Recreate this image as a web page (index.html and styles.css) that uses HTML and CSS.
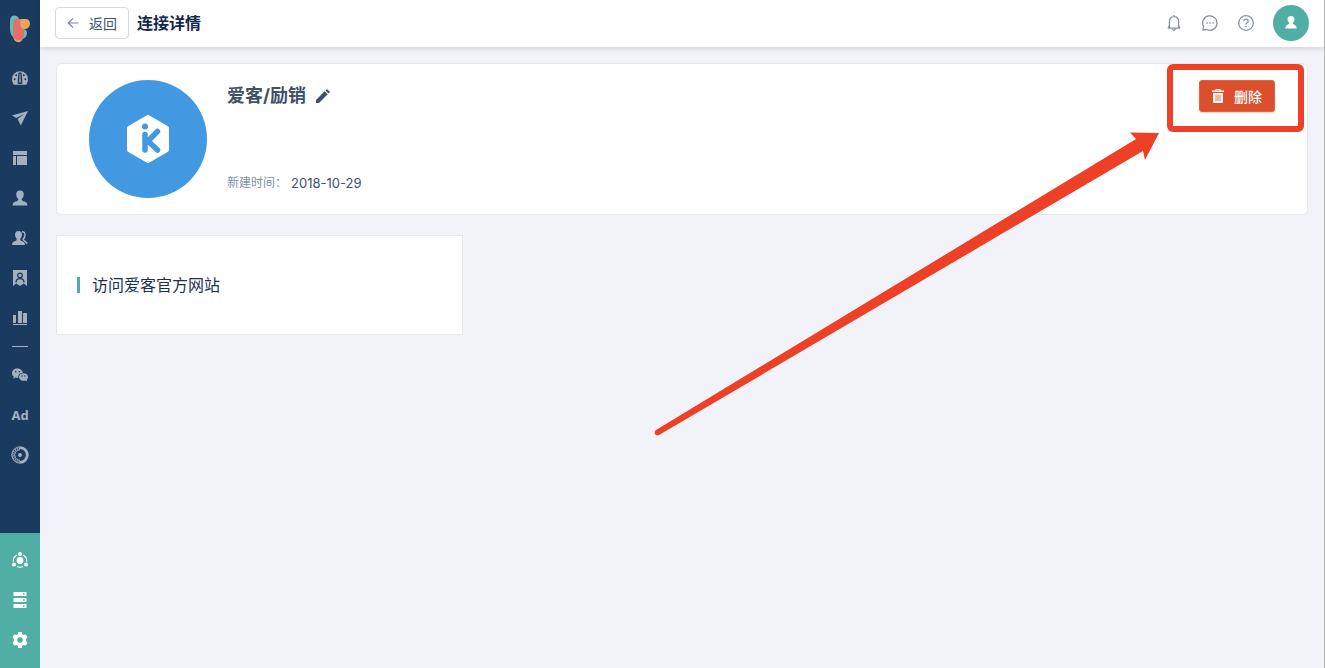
FILE: index.html
```html
<!DOCTYPE html>
<html lang="zh-CN">
<head>
  <meta charset="UTF-8" />
  <meta name="viewport" content="width=device-width, initial-scale=1" />
  <title>连接详情</title>
  <link rel="stylesheet" href="styles.css">
</head>
<body>

  <!-- Sidebar -->
  <nav class="sidebar">
    <a class="logo" href="#home" aria-label="首页">
      <svg width="24" height="30" viewBox="0 0 24 30">
        <path d="M2 7Q2 1.500 6.500 1.500Q10 1.500 11 5V24H7Q2 22 2 15Z" fill="#64bdb2"/>
        <path d="M13 15Q19 14.500 19 19Q19 24.500 13 25Z" fill="#64bdb2"/>
        <path d="M5 22H15Q14.500 28.200 10.500 28.200Q6 28.200 5 22Z" fill="#eba55b"/>
        <path d="M12 5H18Q22 5.500 22 10Q21.500 15 16.500 15H12Z" fill="#eba55b"/>
        <path d="M5 10Q5 5 10 5H12.500Q11 14.500 16 15V20Q15.500 26 10.500 26Q5 26 5 20Z" fill="#e46f6e"/>
      </svg>
    </a>
    <div class="menu">
      <a href="#dashboard" aria-label="仪表盘">
        <svg viewBox="0 0 16 16"><path d="M8 1.200A8 8 0 0 0 0 9.200Q0 12.500 1.800 14.800H14.200Q16 12.500 16 9.200A8 8 0 0 0 8 1.200Z"/><g fill="#1b3a5f"><circle cx="2.600" cy="9.200" r="1"/><circle cx="4.200" cy="5.300" r="1"/><circle cx="11.800" cy="5.300" r="1"/><circle cx="13.400" cy="9.200" r="1"/><path fill-rule="evenodd" d="M6.500 2.500H9.500L10.200 9.500V14H5.800V9.500ZM7.600 4L7.200 12.500H8.800L8.400 4Z"/></g></svg>
      </a>
      <a href="#send" aria-label="发送">
        <svg viewBox="0 0 16 16"><path d="M16 1L0 5.500L4.300 8L12.500 3.800L5.600 9.100L8.800 15.500Z"/></svg>
      </a>
      <a href="#pages" aria-label="页面">
        <svg viewBox="0 0 16 16"><path d="M1 1H15V5H1ZM1 6H4V15H1ZM5 6H15V15H5Z"/></svg>
      </a>
      <a href="#contacts" aria-label="联系人">
        <svg viewBox="0 0 16 16"><path d="M8 .5C5.600.5 4.200 2 4.200 4.500Q4.200 7.300 6.200 9V10Q6 11 3 11.800Q.5 12.500.5 15.500H15.500Q15.500 12.500 13 11.800Q10 11 9.800 10V9Q11.800 7.300 11.800 4.500C11.800 2 10.400.5 8 .5Z"/></svg>
      </a>
      <a href="#groups" aria-label="群组">
        <svg viewBox="0 0 16 16"><path d="M6.500 1C4.300 1 3 2.500 3 4.800Q3 7.300 4.700 8.800V10Q4.500 10.800 2 11.600Q0 12.300 0 15H13Q13 12.300 11 11.600Q8.500 10.800 8.300 10V8.800Q10 7.300 10 4.800C10 2.500 8.700 1 6.500 1Z"/><path d="M10 1.700Q13 1.500 13 5Q13 7.500 11.300 8.800V9.800L15.300 13.600" fill="none" stroke="#a3b1bf" stroke-width="1.500"/></svg>
      </a>
      <a href="#cards" aria-label="名片">
        <svg viewBox="0 0 16 16"><path d="M1 0H15V16L11.800 13.500L8 16L4.200 13.500L1 16Z"/><g fill="none" stroke="#1b3a5f" stroke-width="1.300"><circle cx="8" cy="5.400" r="2.300"/><path d="M4 12.500Q4 8.700 8 8.700Q12 8.700 12 12.500"/></g></svg>
      </a>
      <a href="#reports" aria-label="报表">
        <svg viewBox="0 0 16 16"><path d="M1 5H4V13H1ZM6 1H10V13H6ZM11 3H15V13H11ZM1 14H15V15H1Z"/></svg>
      </a>
    </div>
    <div class="menu menu-extra">
      <a href="#wechat" aria-label="微信">
        <svg viewBox="0 0 16 16"><path d="M5.500 1.500C2.400 1.500 0 3.500 0 6.200Q0 8.300 1.800 9.700L1.200 11.800L3.600 10.600Q4.800 11 6.200 10.900Q5.800 6.300 11 5.500C10.400 3.200 8.300 1.500 5.500 1.500Z"/><path d="M11.500 6.200C8.900 6.200 7 7.900 7 10C7 12.200 9 13.800 11.500 13.800Q12.500 13.800 13.300 13.400L15.200 14.500L14.700 12.700Q16 11.600 16 10C16 7.900 14 6.200 11.500 6.200Z"/><g fill="#1b3a5f"><circle cx="3.700" cy="4.800" r=".8"/><circle cx="7.400" cy="4.800" r=".8"/><circle cx="10" cy="9" r=".7"/><circle cx="13" cy="9" r=".7"/></g></svg>
      </a>
      <a class="ad" href="#ad">Ad</a>
      <a href="#data" aria-label="数据">
        <svg class="wide" viewBox="0 0 18 18" fill="none" stroke="#a3b1bf"><path d="M9 1.700A7.300 7.300 0 0 1 9 16.300" stroke-width="2.800"/><path d="M9 .8A8.200 8.200 0 0 0 9 17.200M9 3.700A5.300 5.300 0 0 0 9 14.300" stroke-width="1"/><path d="M9 2.200A6.800 6.800 0 0 0 9 15.800" stroke-width="1.800" stroke-dasharray="1.200 1"/><circle cx="9" cy="9" r="2" fill="#a3b1bf" stroke="none"/></svg>
      </a>
    </div>
    <div class="menu menu-bottom">
      <a href="#connect" aria-label="连接">
        <svg viewBox="0 0 16 16"><circle cx="8" cy="8.500" r="3.400"/><circle cx="8" cy="2" r="2"/><circle cx="2" cy="12.500" r="2"/><circle cx="14" cy="12.500" r="2"/><path d="M5 3A6.700 6.700 0 0 0 1.300 9.500M11 3A6.700 6.700 0 0 1 14.700 9.500M4.900 14.600Q8 16 11.100 14.600" fill="none" stroke="#fff" stroke-width="1.100"/></svg>
      </a>
      <a href="#storage" aria-label="资源">
        <svg viewBox="0 0 16 16"><path d="M1.500 0H14.500V4H1.500ZM1.500 6H14.500V10H1.500ZM1.500 12H14.500V16H1.500Z"/><path d="M11 2H12.500M11 8H12.500M11 14H12.500" stroke="#50aea5" stroke-width="1.300"/></svg>
      </a>
      <a href="#settings" aria-label="设置">
        <svg viewBox="0 0 16 16"><path fill-rule="evenodd" d="M6.300 0H9.700L10.200 2.300L11.600 3.100L13.900 2.400L15.600 5.300L13.900 6.900V9.100L15.600 10.700L13.900 13.600L11.600 12.900L10.200 13.700L9.700 16H6.300L5.800 13.700L4.400 12.900L2.100 13.600L.4 10.700L2.100 9.100V6.900L.4 5.300L2.100 2.400L4.400 3.100L5.800 2.300ZM8 5.200A2.800 2.800 0 1 0 8 10.800A2.800 2.800 0 1 0 8 5.200Z"/></svg>
      </a>
    </div>
  </nav>

  <div class="page">
    <header class="topbar">
      <button type="button" class="back">
        <svg width="12" height="12" viewBox="0 0 12 12" fill="none" stroke="#7a8798" stroke-width="1.200"><path d="M11.500 6H1.500M6 1.300L1.300 6L6 10.700"/></svg>
        返回
      </button>
      <h1>连接详情</h1>
      <div class="tools">
        <button type="button" aria-label="通知">
          <svg width="16" height="16" viewBox="0 0 16 16"><path d="M8 0V1.500M2 13.200H14M3.400 13V7Q3.400 1.700 8 1.700Q12.600 1.700 12.600 7V13M6.300 14Q8 16.500 9.700 14M3.400 10.500L2 13.200M12.600 10.500L14 13.200"/></svg>
        </button>
        <button type="button" aria-label="消息">
          <svg width="16" height="16" viewBox="0 0 16 16"><path d="M1 15L1.500 11.500A7.200 7.200 0 1 1 4.600 14.500Z"/><path d="M4.300 8H5.700M7.300 8H8.700M10.300 8H11.700" stroke-width="1.400"/></svg>
        </button>
        <button type="button" aria-label="帮助">
          <svg width="16" height="16" viewBox="0 0 16 16"><circle cx="8" cy="8" r="7.300"/><path d="M5.800 6.300Q5.800 4.200 8 4.200Q10.200 4.200 10.200 6.200Q10.200 7.200 9.100 7.800Q8 8.400 8 9.600M8 10.900V12.100"/></svg>
        </button>
        <button type="button" class="avatar" aria-label="账户">
          <svg width="12" height="13" viewBox="0 0 12 13"><path d="M6 0C3.800 0 2.500 1.300 2.500 3.400Q2.500 5.500 4 6.700V8Q.3 9 .3 12.500H11.700Q11.700 9 8 8V6.700Q9.500 5.500 9.500 3.400C9.500 1.300 8.200 0 6 0Z"/></svg>
        </button>
      </div>
    </header>

    <main>
      <section class="card detail">
        <svg class="app-logo" width="118" height="118" viewBox="0 0 118 118">
          <circle cx="59" cy="59" r="59" fill="#4398e2"/>
          <path d="M59 37L78 48V70L59 81L40 70V48Z" fill="#fff" stroke="#fff" stroke-width="4" stroke-linejoin="round"/>
          <circle cx="56" cy="46.500" r="3" fill="#4398e2"/>
          <path d="M56 54.500V70M68.500 51.500L59 61L68.500 70" fill="none" stroke="#4398e2" stroke-width="5.500" stroke-linecap="round" stroke-linejoin="round"/>
        </svg>
        <div class="info">
          <div class="name">
            <h2>爱客/励销</h2>
            <button type="button" class="edit" aria-label="编辑">
              <svg width="14" height="14" viewBox="0 0 14 14"><path d="M0 14V11L8.700 2.300L11.700 5.300L3 14ZM9.500 1.500L10.600.4Q11 0 11.400.4L13.600 2.600Q14 3 13.600 3.400L12.500 4.500Z"/></svg>
            </button>
          </div>
          <p class="created"><span>新建时间：</span><time datetime="2018-10-29">2018-10-29</time></p>
        </div>
        <button type="button" class="delete">
          <svg width="12" height="14" viewBox="0 0 12 14"><path fill-rule="evenodd" d="M3.500 1.500V0H8.500V1.500H12V3H0V1.500ZM4.500 1V1.500H7.500V1ZM1 4H11V13Q11 14 10 14H2Q1 14 1 13Z"/><path d="M4 5.500V12M6 5.500V12M8 5.500V12" stroke="#dc4f2c" stroke-width=".8"/></svg>
          删除
        </button>
        <!-- Marks the delete button -->
        <div class="marker">
          <svg width="506" height="306" viewBox="0 0 506 306"><path d="M3 298L483 7L477 .5L506 1L492 28L490 19L6 303Q3 304 2 302Q1 299.500 3 298Z"/></svg>
        </div>
      </section>

      <a class="card link-card" href="#official"><span>访问爱客官方网站</span></a>
    </main>
  </div>

</body>
</html>
```

FILE: styles.css
```css
* {
  box-sizing: border-box;
}
body {
  display: flex;
  min-height: 100vh;
  margin: 0;
  background-color: #f2f3f8;
  border-right: 1px solid #b5b5b8;
  color: #1b3150;
  font-family: Inter, "Noto Sans CJK SC", sans-serif;
  font-size: 14px;
}
h1, h2, p {
  margin: 0;
}
a {
  color: inherit;
  text-decoration: none;
}
button {
  display: flex;
  align-items: center;
  justify-content: center;
  padding: 0;
  border: none;
  background: none;
  font: inherit;
  cursor: pointer;
}
svg {
  display: block;
  flex: none;
}

/* Sidebar */
.sidebar {
  display: flex;
  flex-direction: column;
  flex: none;
  width: 40px;
  background-color: #1b3a5f;
}
.logo {
  display: flex;
  justify-content: center;
  height: 58px;
  padding-top: 14px;
}
.menu a {
  display: flex;
  align-items: center;
  justify-content: center;
  height: 40px;
}
.menu svg {
  width: 16px;
  height: 16px;
  fill: #a3b1bf;
}
.menu .wide {
  width: 18px;
  height: 18px;
  fill: none;
}
.menu-extra::before {
  content: "";
  display: block;
  width: 16px;
  height: 1px;
  margin: 8px auto;
  background-color: #a3b1bf;
}
.menu .ad {
  color: #a3b1bf;
  font-family: "Noto Sans", sans-serif;
  font-size: 13px;
  font-weight: bold;
}
.menu-bottom {
  margin-top: auto;
  padding: 7px 0 8px;
  background-color: #50aea5;
}
.menu-bottom svg {
  fill: #fff;
}

/* Top bar */
.page {
  flex: 1;
  min-width: 0;
}
.topbar {
  display: flex;
  align-items: center;
  height: 47px;
  padding: 0 15px 2px;
  background-color: #fff;
  box-shadow: 0 1px 6px rgba(30, 40, 70, 0.2);
}
.back {
  gap: 10px;
  width: 74px;
  height: 32px;
  border: 1px solid #d3d8e2;
  border-radius: 4px;
  color: #44546c;
}
.topbar h1 {
  margin-left: 8px;
  color: #13294a;
  font-size: 16px;
  font-weight: bold;
  line-height: 24px;
}
.tools {
  display: flex;
  align-items: center;
  gap: 20px;
  margin-left: auto;
}
.tools svg {
  fill: none;
  stroke: #8493a8;
  stroke-width: 1.3;
}
.tools .avatar {
  width: 36px;
  height: 36px;
  margin-left: -1px;
  border-radius: 50%;
  background-color: #50aea5;
}
.tools .avatar svg {
  fill: #fff;
  stroke: none;
}

/* Content */
main {
  padding: 16px;
}
.card {
  border: 1px solid #e6e8ee;
  background-color: #fff;
}
.detail {
  position: relative;
  display: flex;
  align-items: flex-start;
  padding: 16px 32px;
  border-radius: 5px;
}
.info {
  display: flex;
  flex-direction: column;
  justify-content: space-between;
  align-self: stretch;
  margin-left: 20px;
  padding: 3px 0 6px;
}
.name {
  display: flex;
  align-items: center;
  gap: 10px;
}
.name h2 {
  color: #405069;
  font-size: 18px;
  font-weight: bold;
  line-height: 26px;
}
.edit svg {
  fill: #405069;
}
.created {
  display: flex;
  gap: 4px;
  color: #405069;
  font-size: 12px;
  line-height: 18px;
}
.created span {
  color: #8290a3;
}
.created time {
  font-size: 13px;
}
.delete {
  gap: 10px;
  width: 76px;
  height: 32px;
  margin-left: auto;
  border: 1px solid #e1633c;
  border-radius: 3px;
  background-color: #dc4f2c;
  box-shadow: 0 1px 2px rgba(0, 0, 0, 0.15);
  color: #fff;
  font-weight: 500;
}
.delete svg {
  fill: #fff;
}
.marker {
  position: absolute;
  top: 0;
  right: 3px;
  width: 137px;
  height: 68px;
  border: 6px solid #ed4026;
  border-radius: 6px;
  pointer-events: none;
}
.marker svg {
  position: absolute;
  top: 62px;
  right: 139px;
  fill: #ed4026;
}
.link-card {
  display: flex;
  align-items: center;
  width: 407px;
  max-width: 100%;
  height: 100px;
  margin-top: 20px;
  padding: 0 20px;
  font-size: 16px;
  line-height: 24px;
}
.link-card::before {
  content: "";
  width: 3px;
  height: 16px;
  margin-right: 12px;
  background-color: #50aea5;
}
```
